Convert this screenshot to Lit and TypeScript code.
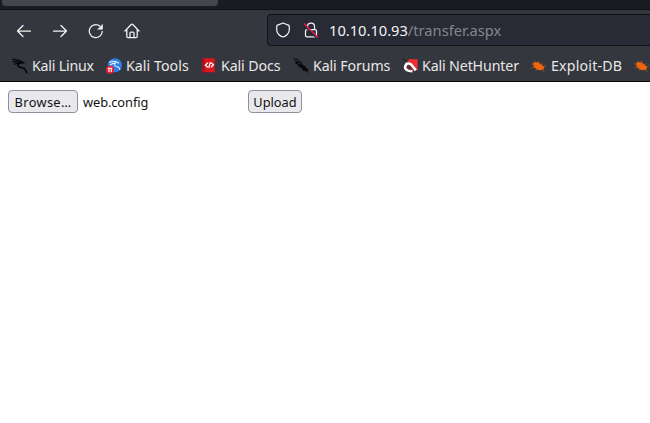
import { LitElement, html, css, svg } from "lit";
import { customElement } from "lit/decorators.js";

const icons: Record<string, unknown> = {
  linux: svg`<path d="M0 1.2 4.5 2 7 2.2 9.3 3.6M.6 4 5 3.4 9 4.6M2 6.4 5.5 5.2 9 4.6 12.5 5.4M9 3.6 11.5 4.2" fill="none" stroke="#08090a" stroke-width="1.3"/><path d="M9 4.8C6.5 5.2 5.4 6.4 6 7.9 6.8 9.7 9.6 9.2 12 10.4 13.8 11.4 14.4 13 14.8 15.4" fill="none" stroke="#050607" stroke-width="1.7"/>`,
  tools: svg`<circle cx="8.9" cy="7.2" r="7" fill="#2f7fe9"/><path d="M3 4.6C6 3 10 3 13 5.2M4 7C7 4.8 9 5 10 5.2M9 5.2C7.5 8 10 8.4 12.2 9 14 9.8 14 11 13.8 12" stroke="#d9eaff" stroke-width="1.1" fill="none"/><circle cx="4" cy="11.8" r="4" fill="#e8212c"/><path d="M1.8 10.2h4.4M3 10v4M5.3 10v4" stroke="#fff" stroke-width="1.1" fill="none"/>`,
  docs: svg`<path d="M1.6 .2H13.8V15.6H1.6Z" fill="#d9161b"/><path d="M1.6 .2H3.6V15.6H1.6Z" fill="#b30d12"/><path d="M2 14.4H14v1.3H2Z" fill="#1e3454"/><path d="M6.8 4.7 4.4 7.2 7 9.5M9.3 4.2 7.8 9.8M10 4.7 12.4 6.8 10.1 9.2" stroke="#fff" stroke-width="1.3" fill="none"/>`,
  forums: svg`<path d="M0 .3 4 .8 6.5 3.4 8.3 4 9 6.3 12 8.1 13.2 10.1 16 11.5 14.5 12.2 15.8 15 12.4 13 10.2 12.7 8.6 10 5.7 8.8 4.7 6.5 2.4 5.7 2.7 3.8Z" fill="#08090a"/><path d="M1.5 1.2 5 3.2M5 5 7 6" stroke="#606268" stroke-width=".6"/>`,
  hunter: svg`<path d="M4 1.2H15.6V13Z" fill="#ef2f35"/><path d="M.6 .8 4 2.4 6.5 1.6" stroke="#17191c" stroke-width="1" fill="none"/><path d="M3.2 9.5C3.4 4.6 7.5 4.7 9.6 7L13.8 12.4M3 9C3 12 6.5 13 10.5 13.2" stroke="#fff" stroke-width="2.6" fill="none"/><path d="M12.3 13.5 8.6 9.2C6.8 7.2 4.8 8.2 5.2 9.8 5.6 11 7.6 11.5 9 12" stroke="#b51d29" stroke-width="1" fill="none"/>`,
  bug: svg`<path d="M1.8 5.2 4.2 4 7.8 4.5 11.2 7.2 13.2 9 12.7 11 10.2 12.3 6.5 11.7 3 9.3Z" fill="#ee650d"/><path d="M.3 6 3 6.5M.5 9.8 4.2 9M4.4 3.8 3 2.6M7.4 5 7.5 2.8M10.6 7 11.6 5.2M12 8.5 15 8M6.4 11 5 12.7M11.5 11 13.3 13.9" stroke="#b45527" stroke-width=".8" fill="none"/>`,
};

interface Bookmark {
  icon: string;
  label?: string;
  tracking?: number;
  width?: number;
}

const bookmarks: Bookmark[] = [
  { icon: "linux", label: "Kali Linux", tracking: -0.2, width: 62 },
  { icon: "tools", label: "Kali Tools", tracking: 0.05, width: 63 },
  { icon: "docs", label: "Kali Docs", tracking: -0.1, width: 60 },
  { icon: "forums", label: "Kali Forums", tracking: -0.1, width: 77 },
  { icon: "hunter", label: "Kali NetHunter", tracking: -0.13, width: 97 },
  { icon: "bug", label: "Exploit-DB", tracking: 0.2, width: 71 },
  { icon: "bug" },
];

@customElement("app-root")
export class AppRoot extends LitElement {
  static styles = css`
    :host { display: block; width: 100%; height: 100vh; overflow: hidden; background: #fff; font-family: "Noto Sans", sans-serif; }
    svg { display: block; flex: none; }
    .tabs { height: 9px; background: #1b1c21; border-bottom: 1px solid #101115; box-sizing: content-box; }
    .tab { width: 216px; height: 6px; margin-left: 2px; background: #45474f; border-radius: 0 0 4px 4px; }
    .chrome { background: #35373f; height: 71px; border-bottom: 1px solid #050506; }
    .nav { display: flex; height: 40px; align-items: center; padding-left: 16px; box-sizing: border-box; }
    .buttons { display: flex; gap: 20px; width: 251px; }
    .buttons svg, .url svg { fill: none; stroke: #f4f4f1; stroke-width: 1.25; stroke-linecap: round; stroke-linejoin: round; }
    .buttons svg { margin-top: 1px; }
    .url { flex: 1; display: flex; align-items: center; height: 32px; box-sizing: border-box; border: 1px solid #101218; border-right: 0; border-radius: 4px 0 0 4px; background: #282a36; padding-left: 7px; }
    .lock { margin: 0 10px 0 12px; }
    .address { color: #f4f4f1; font-size: 14.67px; line-height: 20px; white-space: nowrap; }
    .path { color: #85868d; }
    .bookmarks { display: flex; gap: 12px; height: 31px; align-items: center; padding-left: 12px; overflow: hidden; color: #e8e8e5; font-size: 14.2px; }
    .bookmark { display: flex; flex: none; align-items: center; gap: 4px; line-height: 20px; white-space: nowrap; }
    .form { display: flex; align-items: center; padding: 8px; color: #111; font-size: 12.8px; }
    .file { display: flex; align-items: center; width: 240px; gap: 5px; letter-spacing: -0.07px; }
    button { font: inherit; width: 54px; height: 23px; box-sizing: border-box; padding: 1px 0 0; border: 1px solid #8f8f9d; border-radius: 4px; background: #e9e9ed; color: #111; line-height: 20px; white-space: nowrap; }
    .browse { width: 70px; letter-spacing: 0.35px; }
  `;

  render() {
    return html`
      <div class="tabs"><div class="tab"></div></div>
      <div class="chrome">
        <div class="nav">
          <div class="buttons">
            <svg width="16" height="16"><path d="M14.5 8H1.5M7 2.5 1.5 8 7 13.5"/></svg>
            <svg width="16" height="16"><path d="M1.5 8H14.5M9 2.5 14.5 8 9 13.5"/></svg>
            <svg width="16" height="16"><path d="M11.8 3A6.5 6.5 0 1 0 14.3 8.3"/><path d="M14.5 1.7V6.2H10Z" fill="#f4f4f1" stroke-width=".6"/></svg>
            <svg width="16" height="16"><path d="M1 8 7.2 1.5Q8 .8 8.8 1.5L15 8M2.8 6.8V13.5Q2.8 14.7 4 14.7H12Q13.2 14.7 13.2 13.5V6.8M6 14.5V10Q6 9 7 9H9Q10 9 10 10V14.5"/></svg>
          </div>
          <div class="url">
            <svg width="16" height="16"><path d="M8 1 14 3.3Q15.3 9.5 12 12.7 10.5 14.3 8 15 5.5 14.3 4 12.7.7 9.5 2 3.3Z"/></svg>
            <svg class="lock" width="16" height="16"><path d="M4.5 7.5V4.5C4.5-.1 11.5-.1 11.5 4.5V7.5M4 7.5H12Q13.5 7.5 13.5 9V13.2Q13.5 14.8 12 14.8H4Q2.5 14.8 2.5 13.2V9Q2.5 7.5 4 7.5Z"/><path d="M1 3.5 13 15.5" stroke="#282a36" stroke-width="1.4"/><path d="M1.5 2 14.5 15" stroke="#e41c4b" stroke-width="1.5"/></svg>
            <div class="address">10.10.10.93<span class="path">/transfer.aspx</span></div>
          </div>
        </div>
        <div class="bookmarks">
          ${bookmarks.map(
            ({ icon, label, tracking, width }) => html`<div class="bookmark">
              <svg width="16" height="16" viewBox="0 0 16 16">${icons[icon]}</svg>
              ${label ? html`<span style="width:${width}px;letter-spacing:${tracking}px">${label}</span>` : null}
            </div>`,
          )}
        </div>
      </div>
      <div class="form">
        <div class="file"><button class="browse">Browse…</button><span>web.config</span></div>
        <button>Upload</button>
      </div>
    `;
  }
}
